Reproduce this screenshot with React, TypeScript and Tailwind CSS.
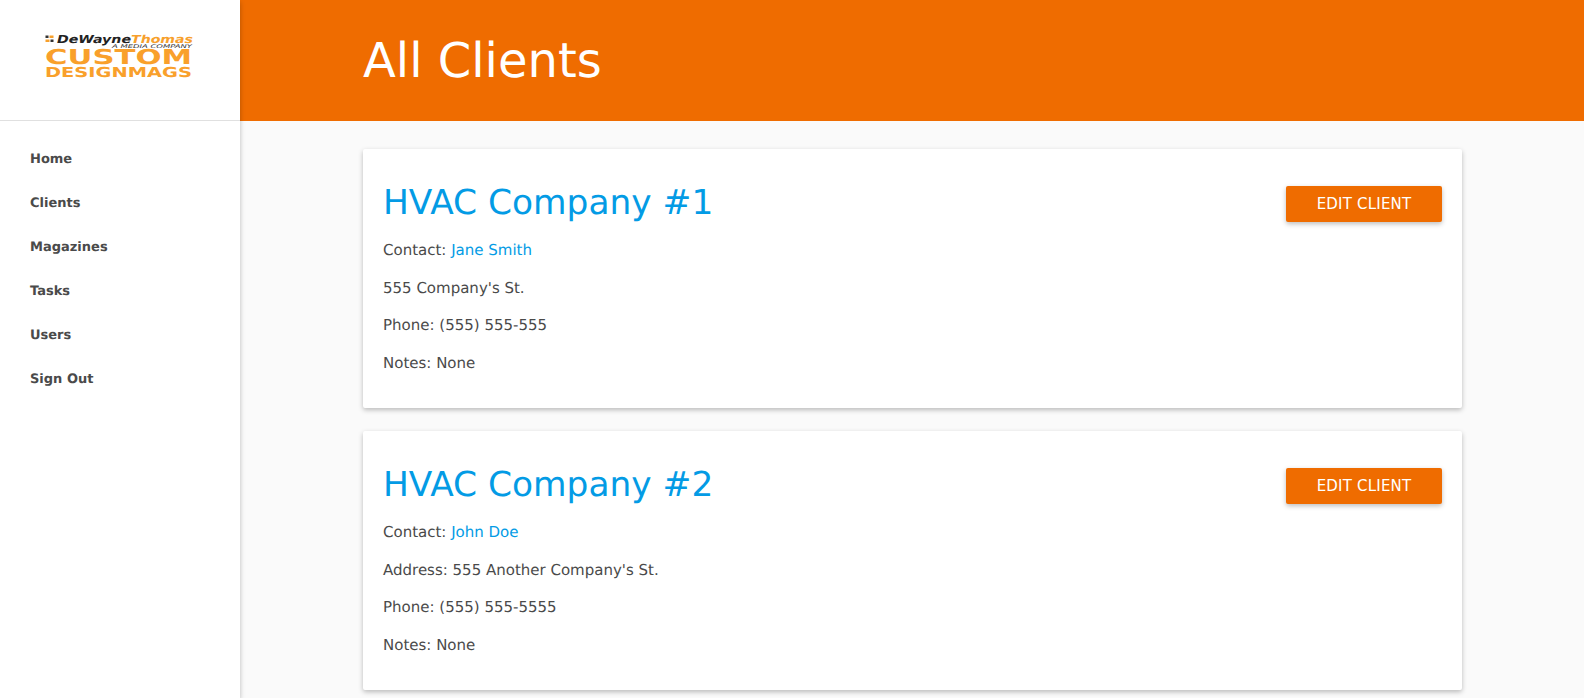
import React from "react";

const navItems = ["Home", "Clients", "Magazines", "Tasks", "Users", "Sign Out"];

const clients = [
  {
    name: "HVAC Company #1",
    contact: "Jane Smith",
    address: "555 Company's St.",
    phone: "Phone: (555) 555-555",
  },
  {
    name: "HVAC Company #2",
    contact: "John Doe",
    address: "Address: 555 Another Company's St.",
    phone: "Phone: (555) 555-5555",
  },
];

const Logo = () => (
  <svg width="150" height="46" viewBox="0 0 150 46" className="block">
    {/* little squares left of the wordmark */}
    <rect x="0.5" y="1.5" width="3" height="2.5" fill="#333333" />
    <rect x="4.5" y="1.5" width="4" height="2.5" fill="#f7a02c" />
    <rect x="0.5" y="5.5" width="4" height="2.5" fill="#f7a02c" />
    <rect x="5.5" y="5.5" width="3" height="2.5" fill="#333333" />
    <text
      x="12"
      y="9"
      textLength="74"
      lengthAdjust="spacingAndGlyphs"
      fontFamily="'DejaVu Sans', sans-serif"
      fontWeight="700"
      fontStyle="italic"
      fontSize="11"
      fill="#222222"
    >
      DeWayne
    </text>
    <text
      x="86"
      y="9"
      textLength="62"
      lengthAdjust="spacingAndGlyphs"
      fontFamily="'DejaVu Sans', sans-serif"
      fontWeight="700"
      fontStyle="italic"
      fontSize="11"
      fill="#f7a02c"
    >
      Thomas
    </text>
    <text
      x="67"
      y="13.5"
      textLength="80"
      lengthAdjust="spacingAndGlyphs"
      fontFamily="'DejaVu Sans', sans-serif"
      fontStyle="italic"
      fontSize="5"
      fill="#333333"
    >
      A MEDIA COMPANY
    </text>
    <text
      x="0"
      y="30"
      textLength="147"
      lengthAdjust="spacingAndGlyphs"
      fontFamily="'DejaVu Sans', sans-serif"
      fontWeight="700"
      fontSize="20.5"
      fill="#f9a02b"
    >
      CUSTOM
    </text>
    <text
      x="0"
      y="43"
      textLength="147"
      lengthAdjust="spacingAndGlyphs"
      fontFamily="'DejaVu Sans', sans-serif"
      fontWeight="700"
      fontSize="13.7"
      fill="#f9a02b"
    >
      DESIGNMAGS
    </text>
  </svg>
);

const ClientCard = ({ client }: { client: (typeof clients)[number] }) => (
  <div className="bg-white rounded-[2px] shadow-[0_2px_5px_0_rgba(0,0,0,0.26)] px-5 pt-5 h-[259px]">
    <div className="flex items-start justify-between">
      <h2 className="text-[34.4px] leading-[68px] h-[68px] text-[#039be5]">{client.name}</h2>
      <button className="mt-[17px] w-[156px] h-9 bg-[#ef6c00] text-white text-[15px] tracking-[0.2px] rounded-[2px] shadow-[0_2px_5px_0_rgba(0,0,0,0.26)]">
        EDIT CLIENT
      </button>
    </div>
    <div className="text-[15px] text-[#4a4a4a] leading-[24px] flex flex-col gap-[13.6px] mt-[1px]">
      <p>
        Contact: <a className="text-[#039be5]">{client.contact}</a>
      </p>
      <p>{client.address}</p>
      <p>{client.phone}</p>
      <p>Notes: None</p>
    </div>
  </div>
);

export default function App() {
  return (
    <div className="flex h-screen overflow-hidden bg-[#fafafa] font-['DejaVu_Sans',sans-serif] [text-rendering:geometricPrecision]">
      <aside className="w-[240px] shrink-0 bg-white shadow-[0_2px_5px_0_rgba(0,0,0,0.26)] z-10">
        <div className="h-[121px] border-b border-[#e0e0e0] flex items-center justify-center pr-[1px] pb-[6px]">
          <Logo />
        </div>
        <nav className="pt-[17px]">
          {navItems.map((item) => (
            <a key={item} className="block h-11 pl-[30px] leading-11 text-[13px] font-bold text-[#4a4a4a]">
              {item}
            </a>
          ))}
        </nav>
      </aside>
      <main className="flex-1 min-w-0">
        <header className="h-[121px] bg-[#ef6c00] pl-[123px] flex items-center">
          <h1 className="text-[48px] text-white">All Clients</h1>
        </header>
        <div className="pl-[123px] pr-[122px] pt-[28px] flex flex-col gap-[23px]">
          {clients.map((client) => (
            <ClientCard key={client.name} client={client} />
          ))}
        </div>
      </main>
    </div>
  );
}
